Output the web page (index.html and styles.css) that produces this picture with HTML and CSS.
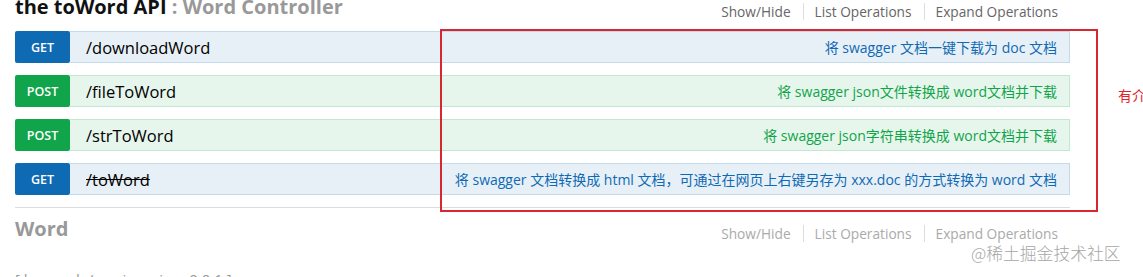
FILE: index.html
```html
<!DOCTYPE html>
<html lang="zh">
<head>
<meta charset="utf-8">
<title>toWord API</title>
<link rel="stylesheet" href="styles.css">
</head>
<body>
<div class="page">
  <section class="resource first">
    <div class="heading">
      <h2 class="title"><span class="api">the toWord API</span><span class="ctrl"> : Word Controller</span></h2>
      <ul class="options">
        <li>Show/Hide</li>
        <li>List Operations</li>
        <li>Expand Operations</li>
      </ul>
    </div>
    <ul class="ops">
      <li class="op get">
        <span class="badge">GET</span>
        <div class="op-body"><span class="path">/downloadWord</span><span class="desc">将 swagger 文档一键下载为 doc 文档</span></div>
      </li>
      <li class="op post">
        <span class="badge">POST</span>
        <div class="op-body"><span class="path">/fileToWord</span><span class="desc">将 swagger json文件转换成 word文档并下载</span></div>
      </li>
      <li class="op post">
        <span class="badge">POST</span>
        <div class="op-body"><span class="path">/strToWord</span><span class="desc">将 swagger json字符串转换成 word文档并下载</span></div>
      </li>
      <li class="op get">
        <span class="badge">GET</span>
        <div class="op-body"><span class="path deprecated">/toWord</span><span class="desc">将 swagger 文档转换成 html 文档，可通过在网页上右键另存为 xxx.doc 的方式转换为 word 文档</span></div>
      </li>
    </ul>
  </section>
  <section class="resource second">
    <div class="heading">
      <h2 class="title"><span class="ctrl">Word</span></h2>
      <ul class="options muted">
        <li>Show/Hide</li>
        <li>List Operations</li>
        <li>Expand Operations</li>
      </ul>
    </div>
  </section>
  <div class="footer">[ base url: / , api version: 0.0.1 ]</div>
</div>
<div class="annotation-box"></div>
<div class="annotation-text">有介绍</div>
<div class="watermark">@稀土掘金技术社区</div>
</body>
</html>
```

FILE: styles.css
```css
html, body {
  margin: 0;
  padding: 0;
  background: #ffffff;
  overflow: hidden;
}

body {
  font-family: "Open Sans", "Noto Sans CJK SC", sans-serif;
  color: #000;
  width: 1143px;
  height: 277px;
  position: relative;
}

.page {
  padding: 0 73px 0 15px;
}

ul {
  list-style: none;
  margin: 0;
  padding: 0;
}

.heading {
  display: flex;
  justify-content: space-between;
  align-items: flex-start;
  height: 36px;
}

.first .heading {
  margin-top: -5px;
}

.second .heading {
  margin-top: 9px;
}

.title {
  margin: 0;
  font-size: 20px;
  line-height: 24px;
  font-weight: 700;
}

.title .api {
  color: #111;
}

.title .ctrl {
  color: #999;
}

.options {
  display: flex;
  margin-top: 8px;
  font-size: 13.7px;
  line-height: 17px;
  color: #666;
}

.options li {
  padding: 0 12px 0 11px;
  border-left: 1px solid #ddd;
}

.options li:first-child {
  border-left: none;
}

.options.muted {
  color: #aaa;
}

.ops {
  border-bottom: 1px solid #ddd;
}

.op {
  display: flex;
  height: 32px;
  margin-bottom: 12px;
}

.badge {
  width: 55px;
  flex: none;
  border-radius: 2px;
  color: #fff;
  font-size: 12.5px;
  font-weight: 600;
  display: flex;
  align-items: center;
  justify-content: center;
}

.op-body {
  flex: 1;
  display: flex;
  align-items: center;
  justify-content: space-between;
  padding: 0 12px 0 16px;
  border: 1px solid;
  border-left: none;
}

.path {
  font-size: 16.5px;
  color: #000;
}

.path.deprecated {
  text-decoration: line-through;
}

.desc {
  font-size: 14px;
}

.get .badge {
  background: #0f6ab4;
}

.get .op-body {
  background: #e7f0f7;
  border-color: #c3d9ec;
}

.get .desc {
  color: #0f6ab4;
}

.post .badge {
  background: #10a54a;
}

.post .op-body {
  background: #e7f6ec;
  border-color: #c3e8d1;
}

.post .desc {
  color: #10a54a;
}

.footer {
  margin-top: 17px;
  font-size: 15px;
  line-height: 18px;
  color: #999;
}

.annotation-box {
  position: absolute;
  left: 440px;
  top: 29px;
  width: 654px;
  height: 179px;
  border: 2px solid #d7282f;
}

.annotation-text {
  position: absolute;
  left: 1118px;
  top: 85px;
  font-size: 14px;
  color: #e0242b;
  white-space: nowrap;
  font-family: "Noto Sans CJK SC", sans-serif;
}

.watermark {
  position: absolute;
  left: 971px;
  top: 242px;
  font-size: 16.8px;
  line-height: 22px;
  color: #a6a6a6;
  font-family: "Noto Sans CJK SC", sans-serif;
  font-weight: 300;
  white-space: nowrap;
}
```
